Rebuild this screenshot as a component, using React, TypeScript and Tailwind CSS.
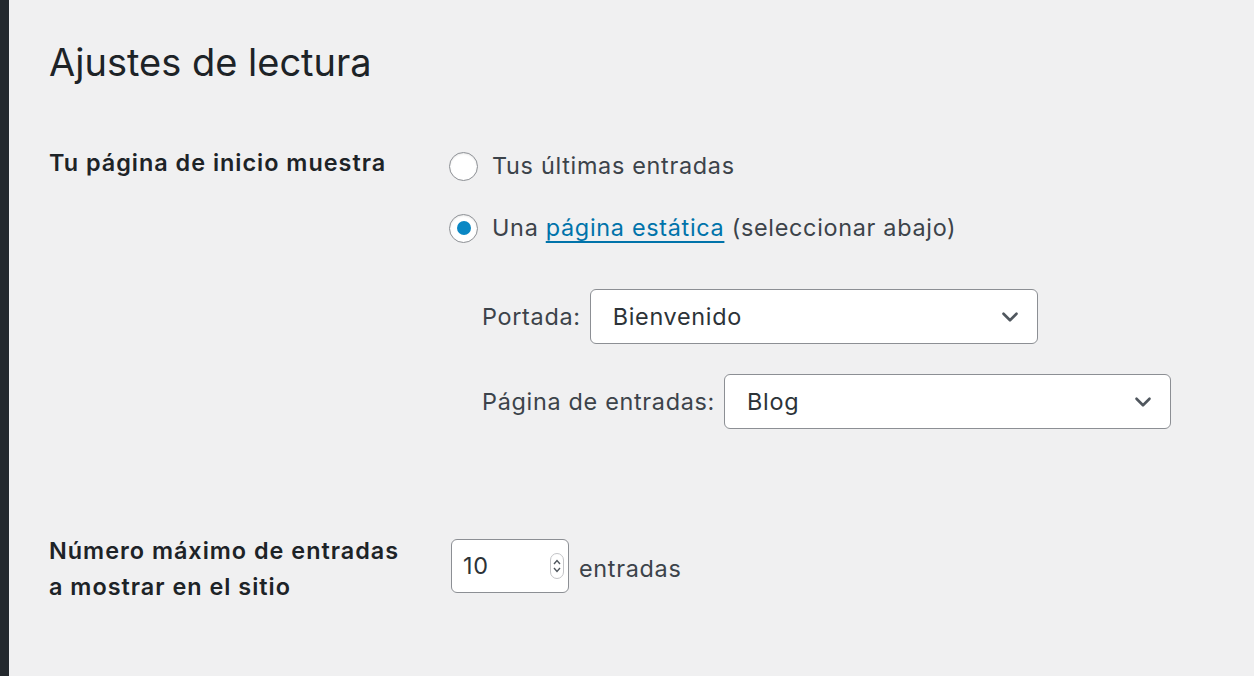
import { ChevronDown } from "lucide-react";

function Radio({ checked }: { checked?: boolean }) {
  return (
    <span className="flex h-[29px] w-[29px] shrink-0 items-center justify-center rounded-full border border-[#8c8f94] bg-white shadow-[inset_0_1px_2px_rgba(0,0,0,0.1)]">
      {checked && <span className="h-[14px] w-[14px] rounded-full bg-[#0a87c4]" />}
    </span>
  );
}

function Select({ value, width }: { value: string; width: string }) {
  return (
    <div
      className={`flex h-[55px] ${width} items-center justify-between rounded-[6px] border border-[#8c8f94] bg-white pl-[22px] pr-[14px] text-[#2c3338]`}
    >
      <span>{value}</span>
      <ChevronDown size={26} strokeWidth={2.4} className="text-[#50575e]" />
    </div>
  );
}

export default function App() {
  return (
    <div
      className="flex min-h-[676px] bg-[#f0f0f1] text-[23.4px] tracking-[0.7px] text-[#3c434a]"
      style={{ fontFamily: "Inter, 'Open Sans', sans-serif" }}
    >
      <div className="w-[9px] shrink-0 bg-[#23282d]" />
      <div className="flex-1 pl-[40px] pt-[36px]">
        <h1 className="text-[38px] leading-[53px] font-normal tracking-normal text-[#1d2327]">
          Ajustes de lectura
        </h1>

        <div className="mt-[45px] flex">
          <div className="w-[400px] shrink-0 pt-[11px] font-semibold leading-[36px] tracking-[1px] text-[#1d2327]">
            Tu página de inicio muestra
          </div>
          <div className="flex flex-col pt-[14px]">
            <label className="flex h-[36px] items-center gap-[14px]">
              <Radio />
              <span>Tus últimas entradas</span>
            </label>
            <label className="mt-[26px] flex h-[36px] items-center gap-[14px]">
              <Radio checked />
              <span>
                Una{" "}
                <a className="text-[#0073aa] underline underline-offset-[5px] decoration-[1.5px]">
                  página estática
                </a>{" "}
                (seleccionar abajo)
              </span>
            </label>
            <div className="mt-[43px] flex items-center gap-[9px] pl-[33px]">
              <span>Portada:</span>
              <Select value="Bienvenido" width="w-[448px]" />
            </div>
            <div className="mt-[30px] flex items-center gap-[9px] pl-[33px]">
              <span>Página de entradas:</span>
              <Select value="Blog" width="w-[447px]" />
            </div>
          </div>
        </div>

        <div className="mt-[104px] flex">
          <div className="w-[402px] shrink-0 font-semibold leading-[36px] tracking-[1px] text-[#1d2327]">
            Número máximo de entradas
            <br />a mostrar en el sitio
          </div>
          <div className="mt-[6px] flex items-start">
            <div className="flex h-[54px] w-[118px] items-center justify-between rounded-[6px] border border-[#8c8f94] bg-white pl-[11px] pr-[4px] text-[#2c3338]">
              <span>10</span>
              <span className="flex h-[26px] w-[14px] flex-col items-center justify-center rounded-[7px] border border-[#c3c4c7] text-[#50575e]">
                <svg width="8" height="6" viewBox="0 0 8 6" fill="none" stroke="currentColor" strokeWidth="1.4">
                  <path d="M1 5 L4 1.5 L7 5" />
                </svg>
                <svg width="8" height="6" viewBox="0 0 8 6" fill="none" stroke="currentColor" strokeWidth="1.4" className="mt-[2px]">
                  <path d="M1 1 L4 4.5 L7 1" />
                </svg>
              </span>
            </div>
            <span className="ml-[10px] mt-[12px]">entradas</span>
          </div>
        </div>
      </div>
    </div>
  );
}
